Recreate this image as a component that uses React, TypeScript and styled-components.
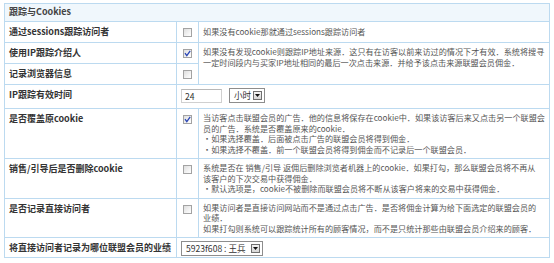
import React from "react";
import styled, { createGlobalStyle } from "styled-components";

const Global = createGlobalStyle`
  html, body { margin: 0; padding: 0; background: #ffffff; }
  body { font-family: "Noto Sans CJK SC", "Noto Sans", sans-serif; }
`;

const Page = styled.div`
  padding: 3px 0 0 4px;
`;

const Table = styled.table`
  width: 546px;
  border-collapse: collapse;
  table-layout: fixed;
  border: 1px solid #bcdaf0;
  font-size: 8.15px;
  line-height: 10.5px;
  color: #555;
`;

const Row = styled.tr<{ $h: number }>`
  height: ${(p) => p.$h}px;
`;

const HeaderCell = styled.td`
  background: #f0f7fc;
  border: 1px solid #bcdaf0;
  padding: 0 4px;
  height: 17px;
  font-size: 9px;
  font-weight: 700;
  color: #444;
  vertical-align: middle;
`;

const LabelCell = styled.td`
  border: 1px solid #bcdaf0;
  padding: 5px 4px 0 4px;
  vertical-align: top;
  font-size: 9px;
  font-weight: 700;
  color: #333;
  white-space: nowrap;
  overflow: hidden;
`;

const CheckCell = styled.td`
  border: 1px solid #bcdaf0;
  padding: 6px 0 0 0;
  vertical-align: top;
  text-align: center;
`;

const DescCell = styled.td`
  border: 1px solid #bcdaf0;
  padding: 4px 3px 3px 4px;
  vertical-align: top;
  white-space: nowrap;
  overflow: hidden;
  color: #555;
`;

const SingleDesc = styled(DescCell)`
  vertical-align: middle;
  padding-top: 0;
  padding-bottom: 0;
`;

const FieldCell = styled.td`
  border: 1px solid #bcdaf0;
  padding: 3px 4px 0 4px;
  vertical-align: top;
  white-space: nowrap;
`;

const FieldRow = styled.div`
  display: flex;
  align-items: center;
  gap: 7px;
`;

const Box = styled.span`
  display: inline-block;
  width: 9px;
  height: 9px;
  border: 1px solid #a3a3a3;
  background: linear-gradient(135deg, #dedede 0%, #f6f6f6 70%, #ffffff 100%);
  box-sizing: border-box;
  position: relative;
  vertical-align: top;
`;

const TextInput = styled.div`
  width: 41px;
  height: 14px;
  box-sizing: border-box;
  border: 1px solid #d0d0d0;
  border-top-color: #b8b8b8;
  padding-left: 3px;
  font-size: 8.6px;
  line-height: 12px;
  color: #333;
`;

const Select = styled.div<{ $w: number }>`
  width: ${(p) => p.$w}px;
  height: 15px;
  box-sizing: border-box;
  border: 1px solid #8d8d8d;
  display: flex;
  align-items: center;
  justify-content: space-between;
  padding: 0 2px 0 4px;
  font-size: 8.6px;
  color: #333;
  background: #fff;
`;

const ArrowBtn = styled.span`
  width: 9px;
  height: 9px;
  flex: none;
  box-sizing: border-box;
  border: 1px solid #707070;
  background: linear-gradient(#f4f4f4, #d6d6d6);
  display: flex;
  align-items: center;
  justify-content: center;
`;

const Check: React.FC<{ checked?: boolean }> = ({ checked }) => (
  <Box>
    {checked && (
      <svg
        width="9"
        height="9"
        viewBox="0 0 9 9"
        style={{ position: "absolute", left: -1, top: -1 }}
      >
        <path d="M2 4.2 L3.8 6.6 L7.2 1.8" fill="none" stroke="#2b46b5" strokeWidth="1.3" />
      </svg>
    )}
  </Box>
);

const Arrow = () => (
  <ArrowBtn>
    <svg width="5" height="3" viewBox="0 0 5 3">
      <path d="M0 0 L5 0 L2.5 3 Z" fill="#111" />
    </svg>
  </ArrowBtn>
);

export default function App() {
  return (
    <>
      <Global />
      <Page>
        <Table>
          <colgroup>
            <col style={{ width: 172 }} />
            <col style={{ width: 22 }} />
            <col />
          </colgroup>
          <tbody>
            <tr>
              <HeaderCell colSpan={3}>跟踪与Cookies</HeaderCell>
            </tr>
            <Row $h={21}>
              <LabelCell>通过sessions跟踪访问者</LabelCell>
              <CheckCell><Check /></CheckCell>
              <SingleDesc>如果没有cookie那就通过sessions跟踪访问者</SingleDesc>
            </Row>
            <Row $h={21}>
              <LabelCell>使用IP跟踪介绍人</LabelCell>
              <CheckCell><Check checked /></CheckCell>
              <DescCell rowSpan={2}>
                如果没有发现cookie则跟踪IP地址来源．这只有在访客以前来访过的情况下才有效．系统将搜寻
                <br />
                一定时间段内与买家IP地址相同的最后一次点击来源．并给予该点击来源联盟会员佣金．
              </DescCell>
            </Row>
            <Row $h={21}>
              <LabelCell>记录浏览器信息</LabelCell>
              <CheckCell><Check /></CheckCell>
            </Row>
            <Row $h={24}>
              <LabelCell>IP跟踪有效时间</LabelCell>
              <FieldCell colSpan={2}>
                <FieldRow>
                  <TextInput>24</TextInput>
                  <Select $w={36}>
                    小时
                    <Arrow />
                  </Select>
                </FieldRow>
              </FieldCell>
            </Row>
            <Row $h={49}>
              <LabelCell>是否覆盖原cookie</LabelCell>
              <CheckCell><Check checked /></CheckCell>
              <DescCell>
                当访客点击联盟会员的广告．他的信息将保存在cookie中．如果该访客后来又点击另一个联盟会
                <br />
                员的广告．系统是否覆盖原来的cookie．
                <br />
                ·如果选择覆盖．后面被点击广告的联盟会员将得到佣金．
                <br />
                ·如果选择不覆盖．前一个联盟会员将得到佣金而不记录后一个联盟会员．
              </DescCell>
            </Row>
            <Row $h={39}>
              <LabelCell>销售/引导后是否删除cookie</LabelCell>
              <CheckCell><Check /></CheckCell>
              <DescCell>
                系统是否在 销售/引导 返佣后删除浏览者机器上的cookie．如果打勾，那么联盟会员将不再从
                <br />
                该客户的下次交易中获得佣金．
                <br />
                ·默认选项是，cookie不被删除而联盟会员将不断从该客户将来的交易中获得佣金．
              </DescCell>
            </Row>
            <Row $h={37}>
              <LabelCell>是否记录直接访问者</LabelCell>
              <CheckCell><Check /></CheckCell>
              <DescCell>
                如果访问者是直接访问网站而不是通过点击广告．是否将佣金计算为给下面选定的联盟会员的
                <br />
                业绩．
                <br />
                如果打勾则系统可以跟踪统计所有的顾客情况，而不是只统计那些由联盟会员介绍来的顾客．
              </DescCell>
            </Row>
            <Row $h={20}>
              <LabelCell>将直接访问者记录为哪位联盟会员的业绩</LabelCell>
              <FieldCell colSpan={2}>
                <FieldRow>
                  <Select $w={82}>
                    5923f608 : 王兵
                    <Arrow />
                  </Select>
                </FieldRow>
              </FieldCell>
            </Row>
          </tbody>
        </Table>
      </Page>
    </>
  );
}
